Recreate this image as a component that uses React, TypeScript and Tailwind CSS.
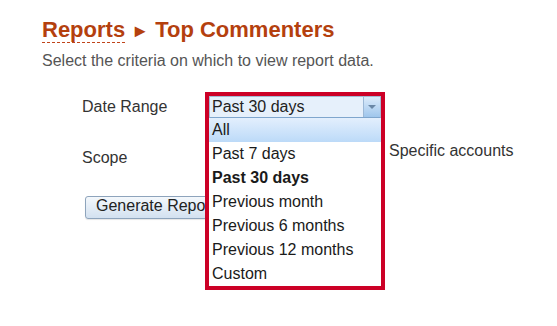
const options = [
  "All",
  "Past 7 days",
  "Past 30 days",
  "Previous month",
  "Previous 6 months",
  "Previous 12 months",
  "Custom",
];

export default function App() {
  const selected = "Past 30 days";

  return (
    <div className="w-[557px] h-[326px] bg-white pt-[17px] pl-[42px] font-['Liberation_Sans',Arial,sans-serif] text-[#333] overflow-hidden">
      <h1 className="h-[26px] text-[22px] leading-[26px] font-bold text-[#b4400e]">
        <span className="border-b border-dashed border-[#c0441a]">Reports</span>{" "}
        <span className="text-[18px] leading-none">►</span> Top Commenters
      </h1>
      <p className="mt-[9px] text-[16px] leading-[18px] text-[#555]">
        Select the criteria on which to view report data.
      </p>

      <div className="pl-[40px] mt-[26px] flex flex-col">
        {/* Date range */}
        <div className="flex items-center h-[22px]">
          <span className="w-[127px] text-[16px] leading-[22px]">Date Range</span>
          <div className="relative w-[172px] h-[22px]">
            <div className="absolute -left-[4px] -top-[4px] w-[180px] border-4 border-[#cc0026] bg-white z-10">
              <div className="flex h-[22px] border border-[#a3bad3] border-b-[#7fa6cd] bg-[#e6f0fb]">
                <span className="flex-1 pl-[2px] text-[16px] leading-[20px] text-[#222]">{selected}</span>
                <span className="w-[17px] flex items-center justify-center border-l border-[#9cb8d6] bg-gradient-to-b from-[#dcebfa] to-[#9fc6ec]">
                  <svg width="8" height="5" viewBox="0 0 8 5">
                    <path d="M0 0h8L4 4z" fill="#6a87a6" />
                  </svg>
                </span>
              </div>
              <ul className="flex flex-col">
                {options.map((o) => (
                  <li
                    key={o}
                    className={
                      "h-[24px] pl-[3px] text-[16px] leading-[24px] text-[#1a1a1a] " +
                      (o === "All" ? "bg-gradient-to-b from-[#e3effd] to-[#bcdaf8] " : "") +
                      (o === selected ? "font-bold" : "")
                    }
                  >
                    {o}
                  </li>
                ))}
              </ul>
            </div>
          </div>
        </div>

        {/* Scope */}
        <div className="flex items-start mt-[22px]">
          <span className="w-[127px] mt-[7px] text-[16px] leading-[22px]">Scope</span>
          <span className="ml-[180px] text-[16px] leading-[22px]">Specific accounts</span>
        </div>

        {/* Generate */}
        <div className="mt-[25px]">
          <button className="ml-[3px] h-[23px] px-[10px] text-[16px] leading-[18px] pb-[2px] text-[#222] border border-[#8ea4bc] rounded-[3px] bg-gradient-to-b from-[#f4f8fc] to-[#d3e1f0] shadow-[0_1px_1px_rgba(0,0,0,0.1)]">
            Generate Report
          </button>
        </div>
      </div>
    </div>
  );
}
